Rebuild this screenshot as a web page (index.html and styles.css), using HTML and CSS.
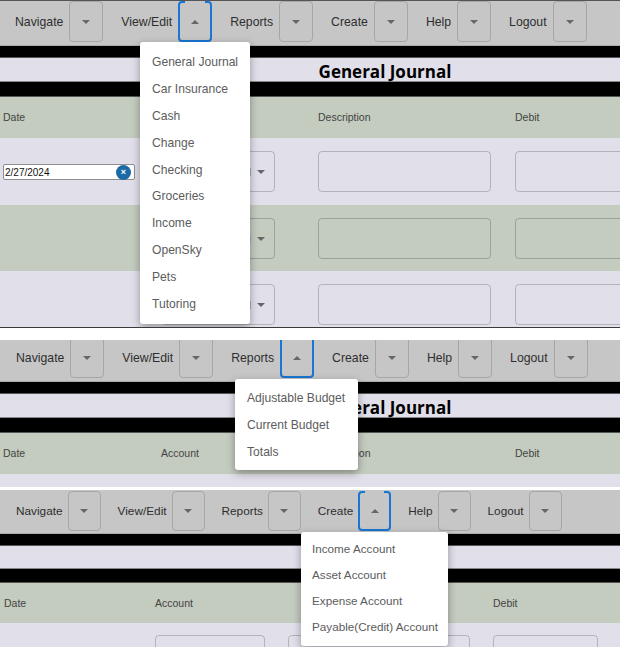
FILE: index.html
```html
<!DOCTYPE html>
<html lang="en">

<head>
    <meta charset="UTF-8">
    <meta name="viewport" content="width=device-width, initial-scale=1.0">
    <title>General Journal</title>
    <link rel="stylesheet" href="styles.css">
</head>

<body>
    <!-- View/Edit menu open -->
    <section class="shot shot-one">
        <nav class="toolbar">
            <div class="nav-item"><span>Navigate</span><button class="caret-btn"><i class="caret"></i></button></div>
            <div class="nav-item"><span>View/Edit</span><button class="caret-btn open"><i class="caret up"></i></button></div>
            <div class="nav-item"><span>Reports</span><button class="caret-btn"><i class="caret"></i></button></div>
            <div class="nav-item"><span>Create</span><button class="caret-btn"><i class="caret"></i></button></div>
            <div class="nav-item"><span>Help</span><button class="caret-btn"><i class="caret"></i></button></div>
            <div class="nav-item"><span>Logout</span><button class="caret-btn"><i class="caret"></i></button></div>
        </nav>
        <div class="band"></div>
        <h1 class="title">General Journal</h1>
        <div class="band band-low"></div>
        <div class="row row-head">
            <span>Date</span><span>Account</span><span>Description</span><span>Debit</span>
        </div>
        <div class="row row-plain">
            <div class="date-box"><span>2/27/2024</span><b class="clear">×</b></div>
            <div class="select-box"><i class="caret"></i></div>
            <div class="text-box"></div>
            <div class="text-box"></div>
        </div>
        <div class="row row-green">
            <div></div>
            <div class="select-box"><i class="caret"></i></div>
            <div class="text-box"></div>
            <div class="text-box"></div>
        </div>
        <div class="row row-plain">
            <div></div>
            <div class="select-box"><i class="caret"></i></div>
            <div class="text-box"></div>
            <div class="text-box"></div>
        </div>
        <ul class="menu menu-view">
            <li>General Journal</li>
            <li>Car Insurance</li>
            <li>Cash</li>
            <li>Change</li>
            <li>Checking</li>
            <li>Groceries</li>
            <li>Income</li>
            <li>OpenSky</li>
            <li>Pets</li>
            <li>Tutoring</li>
        </ul>
    </section>

    <!-- Reports menu open -->
    <section class="shot shot-two">
        <nav class="toolbar">
            <div class="nav-item"><span>Navigate</span><button class="caret-btn"><i class="caret"></i></button></div>
            <div class="nav-item"><span>View/Edit</span><button class="caret-btn"><i class="caret"></i></button></div>
            <div class="nav-item"><span>Reports</span><button class="caret-btn open"><i class="caret up"></i></button></div>
            <div class="nav-item"><span>Create</span><button class="caret-btn"><i class="caret"></i></button></div>
            <div class="nav-item"><span>Help</span><button class="caret-btn"><i class="caret"></i></button></div>
            <div class="nav-item"><span>Logout</span><button class="caret-btn"><i class="caret"></i></button></div>
        </nav>
        <div class="band"></div>
        <h1 class="title">General Journal</h1>
        <div class="band band-low"></div>
        <div class="row row-head">
            <span>Date</span><span>Account</span><span>Description</span><span>Debit</span>
        </div>
        <div class="row row-plain"></div>
        <ul class="menu menu-reports">
            <li>Adjustable Budget</li>
            <li>Current Budget</li>
            <li>Totals</li>
        </ul>
    </section>

    <!-- Create menu open -->
    <section class="shot shot-three">
        <nav class="toolbar">
            <div class="nav-item"><span>Navigate</span><button class="caret-btn"><i class="caret"></i></button></div>
            <div class="nav-item"><span>View/Edit</span><button class="caret-btn"><i class="caret"></i></button></div>
            <div class="nav-item"><span>Reports</span><button class="caret-btn"><i class="caret"></i></button></div>
            <div class="nav-item"><span>Create</span><button class="caret-btn open"><i class="caret up"></i></button></div>
            <div class="nav-item"><span>Help</span><button class="caret-btn"><i class="caret"></i></button></div>
            <div class="nav-item"><span>Logout</span><button class="caret-btn"><i class="caret"></i></button></div>
        </nav>
        <div class="band"></div>
        <div class="title"></div>
        <div class="band band-low"></div>
        <div class="row row-head">
            <span>Date</span><span>Account</span><span></span><span>Debit</span>
        </div>
        <div class="row row-plain">
            <div></div>
            <div class="text-box"></div>
            <div class="text-box"></div>
            <div class="text-box"></div>
        </div>
        <ul class="menu menu-create">
            <li>Income Account</li>
            <li>Asset Account</li>
            <li>Expense Account</li>
            <li>Payable(Credit) Account</li>
        </ul>
    </section>
</body>

</html>
```

FILE: styles.css
```css
html,
body {
    margin: 0;
    padding: 0;
    background-color: #fff;
    overflow: hidden;
}

body {
    font-family: 'Liberation Sans', Arial, sans-serif;
    height: 647px;
}

.shot {
    position: relative;
    overflow: hidden;
    background-color: #e1dfea;
}

.shot-one {
    height: 327px;
    border-bottom: 1px solid #3a3a3a;
}

.shot-two {
    height: 147px;
    margin-top: 12px;
}

.shot-three {
    height: 157px;
    margin-top: 3px;
}

.toolbar {
    display: flex;
    gap: 18px;
    height: 46px;
    padding-left: 15px;
    box-sizing: border-box;
    background-color: #c6c6c6;
    border-top: 1px solid #555;
    border-bottom: 1px solid #aaa;
}

.shot-two .toolbar {
    padding-left: 16px;
    height: 42px;
    border-top: 0;
}

.shot-three .toolbar {
    gap: 17px;
    padding-left: 16px;
    padding-top: 1px;
    height: 44px;
    border-top: 0;
}

.nav-item {
    display: flex;
    align-items: flex-start;
    gap: 6px;
    font-size: 12.25px;
    color: #2e2e2e;
}

.nav-item span {
    line-height: 42px;
}

.shot-two .nav-item span {
    margin-top: -3px;
}

.shot-three .nav-item {
    gap: 5px;
    font-size: 11.8px;
}

.shot-three .nav-item span {
    line-height: 40px;
}

.caret-btn {
    display: flex;
    align-items: center;
    justify-content: center;
    width: 34px;
    height: 41px;
    padding: 0;
    background: transparent;
    border: 1px solid #a6a6a6;
    border-radius: 4px;
}

.shot-two .caret-btn {
    margin-top: -3px;
}

.shot-three .caret-btn {
    width: 33px;
    height: 40px;
}

.caret-btn.open {
    position: relative;
    border: 2px solid #1976d2;
}

/* gap in the focus ring at the top */
.caret-btn.open::before {
    content: "";
    position: absolute;
    top: -2px;
    left: 5px;
    right: 5px;
    height: 2px;
    background-color: #c6c6c6;
}

.caret {
    display: block;
    width: 0;
    height: 0;
    border-left: 4px solid transparent;
    border-right: 4px solid transparent;
    border-top: 4px solid #666;
}

.caret.up {
    border-top: 0;
    border-bottom: 4px solid #666;
}

.band {
    height: 11px;
    background-color: #000;
    border-bottom: 1px solid #555;
}

.band-low {
    height: 14px;
    border-top: 1px solid #888;
}

.shot-three .band-low {
    height: 13px;
}

.title {
    height: 23px;
    margin: 0;
    padding-left: 150px;
    font-family: 'Open Sans', sans-serif;
    font-size: 17px;
    font-weight: 700;
    line-height: 27px;
    text-align: center;
    color: #000;
}

.shot-three .title {
    height: 22px;
}

.row {
    display: grid;
    grid-template-columns: 158px 157px 197px 1fr;
    padding-left: 3px;
    box-sizing: border-box;
    overflow: hidden;
}

.row-head {
    height: 41px;
    padding-bottom: 2px;
    align-items: center;
    font-size: 10.5px;
    color: #444;
    background-color: #c4cbbf;
}

.shot-three .row-head {
    height: 40px;
    padding-bottom: 0;
}

.row-plain,
.row-green {
    height: 67px;
    padding-top: 13px;
}

.row-green {
    height: 66px;
    background-color: #c4cbbf;
}

.shot-three .row {
    grid-template-columns: 151px 133px 205px 1fr;
    padding-left: 4px;
}

.shot-three .row-plain {
    padding-top: 12px;
}

.date-box {
    display: flex;
    align-items: center;
    justify-content: space-between;
    width: 132px;
    height: 16px;
    margin-top: 13px;
    padding: 0 2px 0 1px;
    box-sizing: border-box;
    background-color: #fff;
    border: 1px solid #8f8f8f;
    border-radius: 2px;
    font-size: 10px;
    color: #111;
}

.clear {
    display: flex;
    align-items: center;
    justify-content: center;
    width: 15px;
    height: 15px;
    margin-right: 1px;
    border-radius: 50%;
    background-color: #1b6aa5;
    font-size: 9px;
    color: #fff;
}

.select-box {
    position: relative;
    display: flex;
    align-items: center;
    justify-content: flex-end;
    width: 114px;
    height: 41px;
    padding-right: 9px;
    box-sizing: border-box;
    border: 1px solid rgba(0, 0, 0, 0.2);
    border-radius: 4px;
}

/* end of the account name, the menu hides the rest */
.select-box::before {
    content: "";
    position: absolute;
    top: 16px;
    left: 87px;
    width: 2px;
    height: 8px;
    background-color: #9fb4c8;
}

.text-box {
    height: 41px;
    width: 173px;
    box-sizing: border-box;
    border: 1px solid rgba(0, 0, 0, 0.2);
    border-radius: 4px;
}

.row .text-box:last-child {
    width: 105px;
}

.shot-one .row .text-box:last-child {
    width: 120px;
}

.shot-three .text-box {
    width: 110px;
}

.shot-three .text-box:nth-child(3) {
    width: 182px;
}

.menu {
    position: absolute;
    margin: 0;
    padding: 0;
    box-sizing: border-box;
    list-style: none;
    background-color: #fff;
    border-radius: 3px;
    box-shadow: 0 3px 8px rgba(0, 0, 0, 0.35);
    font-size: 12.1px;
    color: #5c5c5c;
}

.menu li {
    height: 26.9px;
    line-height: 26.9px;
    padding: 0 12px;
    white-space: nowrap;
}

.menu-view {
    left: 140px;
    top: 42px;
    width: 110px;
    padding: 7px 0 6px;
}

.menu-reports {
    left: 235px;
    top: 39px;
    width: 123px;
    padding: 6px 0 4px;
}

.menu-create {
    left: 301px;
    top: 42px;
    width: 147px;
    padding: 4px 0 6px;
    font-size: 11.7px;
}

.menu-create li {
    height: 26px;
    line-height: 26px;
    padding: 0 11px;
}
```
